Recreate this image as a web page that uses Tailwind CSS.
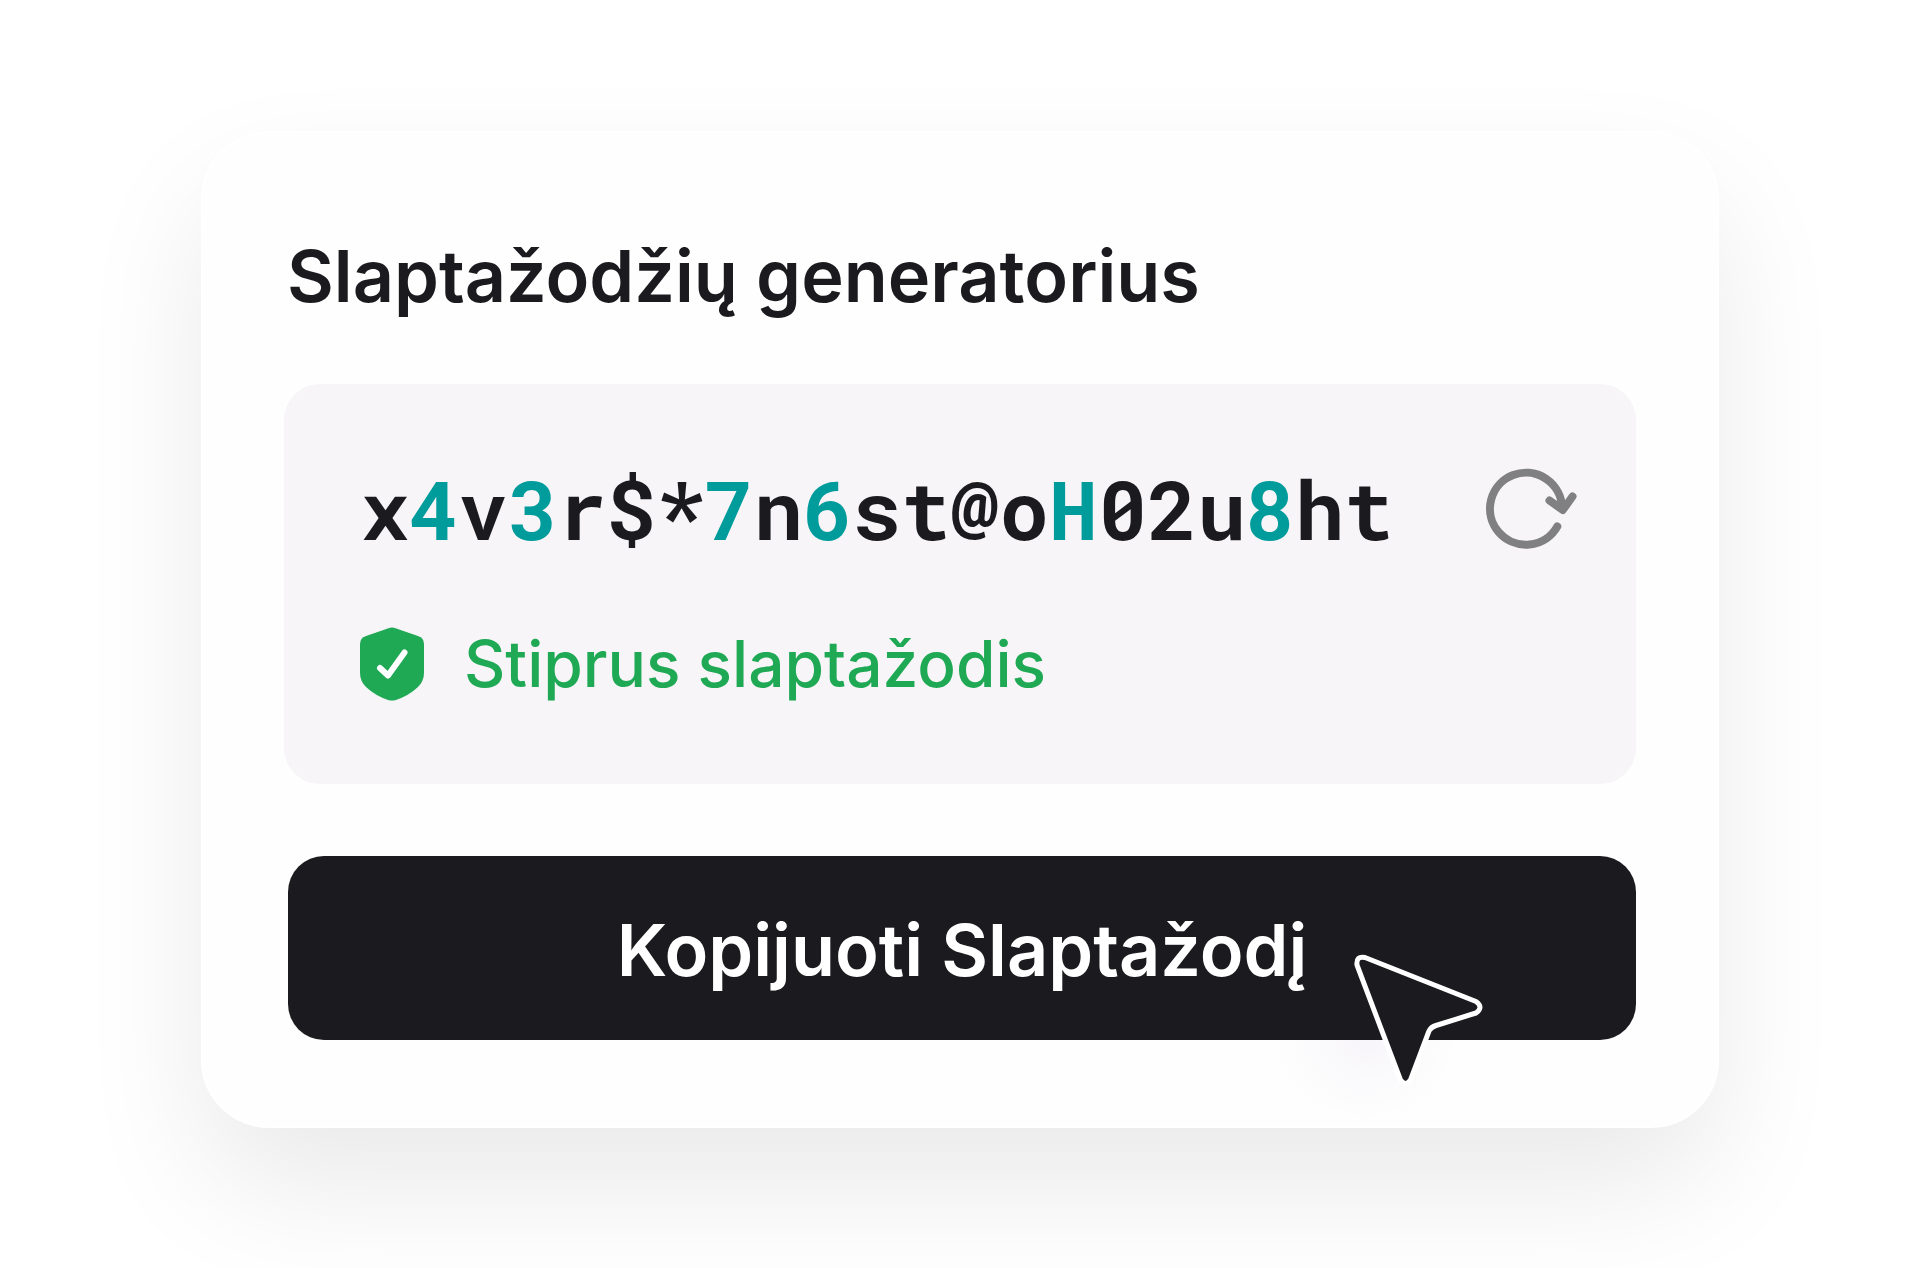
<!DOCTYPE html>
<html lang="lt">
<head>
<meta charset="utf-8">
<meta name="viewport" content="width=device-width, initial-scale=1">
<title>Slaptažodžių generatorius</title>
<script src="https://cdn.jsdelivr.net/npm/@tailwindcss/browser@4"></script>
</head>
<body class="min-h-screen overflow-hidden bg-white font-['Inter',sans-serif] text-[#1b1a1e]">
<main class="px-[201px] pt-[131px]">
  <section class="rounded-[68px] border-2 border-white bg-[#fefefe] px-[81px] pt-[99px] pb-[86px] shadow-[0_60px_130px_-4px_rgba(0,0,0,0.09)]">
    <h1 class="px-[3px] text-[72px] leading-[88px] font-semibold">Slaptažodžių generatorius</h1>
    <div class="mt-16 rounded-[36px] bg-[#f7f5f8] px-[76px] pt-[68px] pb-[76px]">
      <div class="flex items-center justify-between">
        <output class="font-['Roboto_Mono','DejaVu_Sans_Mono',monospace] text-[82px] leading-[112px] font-bold whitespace-nowrap">x<span class="text-[#009b9b]">4</span>v<span class="text-[#009b9b]">3</span>r$*<span class="text-[#009b9b]">7</span>n<span class="text-[#009b9b]">6</span>st@o<span class="text-[#009b9b]">H</span>02u<span class="text-[#009b9b]">8</span>ht</output>
        <button type="button" aria-label="Generuoti iš naujo" class="-mr-5 shrink-0">
          <svg class="h-[92px] w-24" viewBox="1484 462 96 92" fill="none" stroke="#808083" stroke-width="8" stroke-linecap="round" stroke-linejoin="round">
            <path d="M1557.3 526.5A36 36 0 1 1 1562 508"/>
            <path d="M1549.5 500.5L1562.8 510L1572.5 496.500"/>
            <path d="M1557 504L1562.800 509L1567 503Z" fill="#808083" stroke-width="4"/>
          </svg>
        </button>
      </div>
      <p class="mt-14 flex items-center gap-10 text-[64px] leading-[88px] font-medium text-[#20a955]">
        <svg class="h-[74px] w-16 shrink-0" viewBox="0 0 64 74" fill="none" aria-hidden="true">
          <path fill="#20a955" d="M28.500 1.200Q32 0 35.500 1.200L58 9Q64 11.200 64 17V46Q64 54 58 60Q49 68.500 36 73Q32 74.200 28 73Q15 68.500 6 60Q0 54 0 46V17Q0 11.200 6 9Z"/>
          <path d="M20 41L28 48.500L44.500 25.500" stroke="#fff" stroke-width="6" stroke-linecap="round" stroke-linejoin="round"/>
        </svg>
        <span>Stiprus slaptažodis</span>
      </p>
    </div>
    <div class="relative mt-[72px] pl-1">
      <div class="absolute right-[180px] -bottom-20 h-40 w-[180px] rounded-full bg-[radial-gradient(closest-side,#f7f5f9,#fefefe)]" aria-hidden="true"></div>
      <button type="button" class="relative h-[184px] w-full rounded-[36px] bg-[#1b1a1e] pt-[3px] text-[72px] leading-[88px] font-semibold text-white">Kopijuoti Slaptažodį</button>
      <svg class="pointer-events-none absolute top-[92px] right-[148px] h-[144px] w-[140px]" viewBox="1348 948 140 144" aria-hidden="true">
        <path d="M1365 957.500L1476 1001.500Q1484 1007 1476 1013L1436 1025.500Q1431 1027 1429 1031L1410.500 1080Q1405.500 1087 1400.500 1080L1357 965Q1356 955.500 1365 957.500Z" fill="#1b1a1e" stroke="#fff" stroke-width="5" stroke-linejoin="round"/>
      </svg>
    </div>
  </section>
</main>
</body>
</html>
